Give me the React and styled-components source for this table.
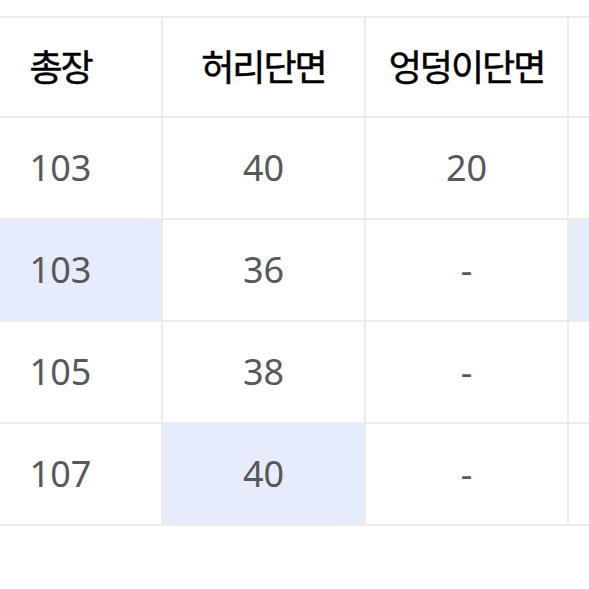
import React from "react";
import styled, { createGlobalStyle } from "styled-components";

const GlobalStyle = createGlobalStyle`
  html, body {
    margin: 0;
    padding: 0;
    background: #ffffff;
    overflow: hidden;
  }
  body {
    font-family: "Noto Sans", "Noto Sans CJK KR", sans-serif;
  }
`;

const headers = ["총장", "허리단면", "엉덩이단면", "허벅지단면", "밑단단면"];

// mark = which cells are tinted blue
const rows = [
  { values: ["103", "40", "20", "24", "19"], mark: [] },
  { values: ["103", "36", "-", "22", "18"], mark: [0, 3] },
  { values: ["105", "38", "-", "23", "18"], mark: [] },
  { values: ["107", "40", "-", "24", "19"], mark: [1] },
];

export default function App() {
  return (
    <>
      <GlobalStyle />
      <Page>
        <SizeTable>
          {headers.map((h) => (
            <HeadCell key={h}>{h}</HeadCell>
          ))}
          {rows.map((row, r) =>
            row.values.map((v, c) => (
              <BodyCell key={`${r}-${c}`} $marked={row.mark.includes(c)}>
                {v}
              </BodyCell>
            ))
          )}
        </SizeTable>
      </Page>
    </>
  );
}

const Page = styled.div`
  width: 589px;
  height: 589px;
  overflow: hidden;
  padding-top: 16px;
  box-sizing: border-box;
`;

const SizeTable = styled.div`
  display: grid;
  grid-template-columns: repeat(5, 201px);
  grid-template-rows: 98px repeat(4, 100px);
  gap: 2px;
  padding: 2px;
  width: max-content;
  margin-left: -42px;
  background: #ebebeb;
`;

const HeadCell = styled.div`
  display: flex;
  align-items: center;
  justify-content: center;
  background: #ffffff;
  color: #000000;
  font-family: "Noto Sans CJK KR", sans-serif;
  font-size: 36px;
  font-weight: 400;
  letter-spacing: -2px;
  padding-bottom: 4px;
  -webkit-text-stroke: 0.5px #000000;
`;

const BodyCell = styled.div`
  display: flex;
  align-items: center;
  justify-content: center;
  background: ${({ $marked }) => ($marked ? "#e6ecfb" : "#ffffff")};
  color: #57575c;
  font-family: "Noto Sans", sans-serif;
  font-size: 36px;
  font-weight: 400;
  padding-bottom: 2px;
`;
